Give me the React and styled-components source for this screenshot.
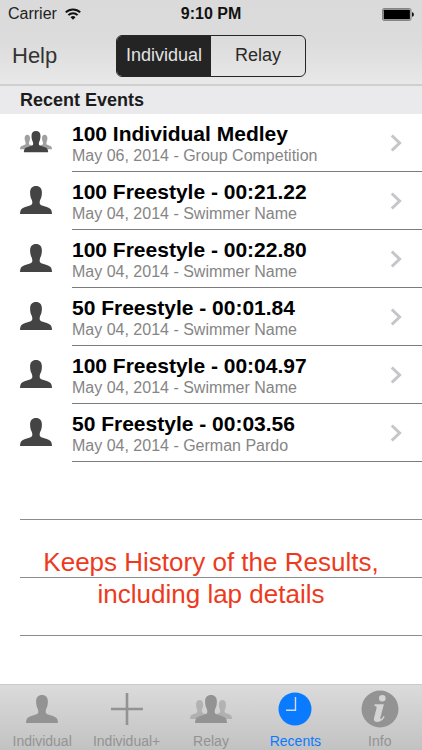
import React, { useState } from "react";
import styled, { createGlobalStyle } from "styled-components";

const GlobalStyle = createGlobalStyle`
  *, *::before, *::after { box-sizing: border-box; }
  body {
    margin: 0;
    background: #fff;
    font-family: "Liberation Sans", Arial, sans-serif;
    color: #000;
  }
  button { font: inherit; border: 0; padding: 0; margin: 0; background: none; color: inherit; cursor: pointer; }
`;

const Screen = styled.div`
  display: flex;
  flex-direction: column;
  min-height: 100vh;
`;

const Header = styled.header`
  background: linear-gradient(#dadada 0%, #dcdcdc 50%, #e8e8e8 100%);
  border-bottom: 2px solid #cfcfcf;
`;

const StatusBar = styled.div`
  display: grid;
  grid-template-columns: 1fr auto 1fr;
  align-items: center;
  height: 28px;
  padding: 0 8px;
`;

const Carrier = styled.div`
  display: flex;
  align-items: center;
  gap: 8px;
  font-size: 16px;
  color: #222;
`;

const Clock = styled.div`
  font-size: 16px;
  font-weight: 700;
  color: #111;
`;

const Battery = styled.div`
  display: flex;
  justify-content: flex-end;
`;

const NavBar = styled.nav`
  display: grid;
  grid-template-columns: 1fr minmax(0, 190px) 1fr;
  align-items: center;
  height: 56px;
  padding: 0 12px;
`;

const HelpButton = styled.button`
  justify-self: start;
  font-size: 22px;
  color: #333;
`;

const Segments = styled.div`
  display: grid;
  grid-template-columns: 1fr 1fr;
  height: 42px;
  border: 1px solid #262626;
  border-radius: 6px;
  overflow: hidden;
`;

const Segment = styled.button`
  font-size: 18px;
  padding-bottom: 2px;
  color: ${(p) => (p.$active ? "#e2e2e2" : "#2a2a2a")};
  background: ${(p) => (p.$active ? "#242424" : "transparent")};
`;

const SectionTitle = styled.h2`
  margin: 0;
  padding: 0 20px;
  font-size: 18px;
  line-height: 28px;
  font-weight: 700;
  color: #1c1c1c;
  background: #eaeaec;
`;

const Content = styled.main`
  position: relative;
  flex: 1;
  overflow: hidden;
`;

const List = styled.ul`
  list-style: none;
  margin: 0;
  padding: 0;
`;

const Row = styled.li`
  display: flex;
  height: 58px;
  padding-left: 20px;
`;

const RowIcon = styled.span`
  display: flex;
  align-items: center;
  flex: 0 0 52px;
  padding-bottom: 2px;
  color: #444;
`;

const RowLink = styled.a`
  display: flex;
  align-items: center;
  justify-content: space-between;
  flex: 1;
  min-width: 0;
  padding-right: 20px;
  border-bottom: 1px solid #7c7c7c;
  color: inherit;
  text-decoration: none;
`;

const EventText = styled.div`
  padding-top: 2px;
`;

const EventName = styled.div`
  font-size: 21px;
  line-height: 24px;
  font-weight: 700;
`;

const EventDetail = styled.div`
  font-size: 16px;
  line-height: 20px;
  color: #858585;
`;

const EmptyRow = styled.li`
  height: 58px;
  margin-left: 20px;
  border-bottom: 1px solid #8c8c8c;
`;

const Caption = styled.p`
  position: absolute;
  left: 0;
  right: 0;
  bottom: 74px;
  margin: 0;
  text-align: center;
  font-size: 26px;
  line-height: 32px;
  color: #ee3a1c;
`;

const TabBar = styled.nav`
  display: grid;
  grid-template-columns: repeat(5, 1fr);
  height: 66px;
  border-top: 1px solid #cacaca;
  background: linear-gradient(#dbdbdb, #c2c2c2);
`;

const Tab = styled.button`
  display: flex;
  flex-direction: column;
  align-items: center;
  font-size: 14px;
  line-height: 16px;
  color: ${(p) => (p.$active ? "#0a7aff" : "#939393")};
`;

const TabIcon = styled.span`
  display: flex;
  align-items: center;
  justify-content: center;
  height: 48px;
`;

const PERSON =
  "M16 0c-3.800 0-5.900 2.400-5.900 6.400 0 2.900.6 5.200 1.400 6.900.6 1.200.8 2 .8 3.400 0 1.400-.5 2-2.300 2.700l-4.800 1.500C2.600 21.800 1.200 22.800.7 24.200.3 25.400 0 26.700 0 28h32c0-1.300-.3-2.600-.7-3.800-.5-1.400-1.900-2.400-4.500-3.300l-4.800-1.500c-1.800-.7-2.300-1.300-2.300-2.700 0-1.400.2-2.200.8-3.400.8-1.700 1.400-4 1.400-6.900C21.900 2.400 19.800 0 16 0z";

const PersonIcon = () => (
  <svg width="32" height="28" viewBox="0 0 32 28" fill="currentColor" aria-hidden="true">
    <path d={PERSON} />
  </svg>
);

const GroupIcon = ({ width }) => (
  <svg width={width} height={(width * 28) / 42} viewBox="0 0 42 28" aria-hidden="true">
    <g fill="currentColor" opacity="0.5">
      <path d={PERSON} transform="translate(0 5) scale(0.6 0.68)" />
      <path d={PERSON} transform="translate(22.800 5) scale(0.6 0.68)" />
    </g>
    <path d={PERSON} transform="translate(5 0)" fill="currentColor" />
  </svg>
);

const PlusIcon = () => (
  <svg width="32" height="32" viewBox="0 0 32 32" stroke="currentColor" strokeWidth="2.600" aria-hidden="true">
    <path d="M16 0v32M0 16h32" />
  </svg>
);

const RecentsIcon = () => (
  <svg width="34" height="34" viewBox="0 0 34 34" fill="none" aria-hidden="true">
    <circle cx="17" cy="17" r="16.500" fill="currentColor" />
    <path d="M17.500 5v13.300H8" stroke="#cfdcf0" strokeWidth="1.400" />
  </svg>
);

const InfoIcon = () => (
  <svg width="38" height="38" viewBox="0 0 38 38" aria-hidden="true">
    <circle cx="19" cy="19" r="18.500" fill="currentColor" />
    <circle cx="21.300" cy="8.300" r="3.300" fill="#d4d4d4" />
    <path
      d="M13.500 14.300h9.400l-3.600 13.500c-.3 1.300.5 1.500 1.200.9.800-.6 1.500-1.600 2.100-2.600l1.100.7c-1.800 3.300-4.200 5.200-7.200 5.200-2.900 0-4.100-1.700-3.500-4.100l2.600-9.800c.3-1.300-.1-2-2.100-2.100z"
      fill="#d4d4d4"
    />
  </svg>
);

const WifiIcon = () => (
  <svg width="16" height="12" viewBox="0 0 16 12" fill="none" stroke="#111" strokeWidth="2" aria-hidden="true">
    <path d="M.8 4.400a10.200 10.200 0 0 1 14.400 0M3.400 7.100a6.500 6.500 0 0 1 9.200 0" />
    <path d="M8 11.800 5.500 9.300a3.500 3.500 0 0 1 5 0z" fill="#111" stroke="none" />
  </svg>
);

const BatteryIcon = () => (
  <svg width="32" height="13" viewBox="0 0 32 13" role="img" aria-label="Battery full">
    <rect x=".5" y=".5" width="28.500" height="12" rx="1.500" fill="#c4c4c4" stroke="#858585" />
    <rect x="1.700" y="1.700" width="26.200" height="9.600" rx=".6" fill="#000" />
    <path d="M30 4.300c1.300.3 1.900 1.100 1.900 2.200s-.6 1.900-1.900 2.200z" fill="#111" />
  </svg>
);

const ChevronIcon = () => (
  <svg width="12" height="18" viewBox="0 0 12 18" fill="none" stroke="#c5c5ca" strokeWidth="3" aria-hidden="true">
    <path d="m1.800 1.500 7.800 7.500-7.800 7.500" />
  </svg>
);

const EVENTS = [
  { name: "100 Individual Medley", detail: "May 06, 2014 - Group Competition", group: true },
  { name: "100 Freestyle - 00:21.22", detail: "May 04, 2014 - Swimmer Name" },
  { name: "100 Freestyle - 00:22.80", detail: "May 04, 2014 - Swimmer Name" },
  { name: "50 Freestyle - 00:01.84", detail: "May 04, 2014 - Swimmer Name" },
  { name: "100 Freestyle - 00:04.97", detail: "May 04, 2014 - Swimmer Name" },
  { name: "50 Freestyle - 00:03.56", detail: "May 04, 2014 - German Pardo" },
];

const TABS = [
  { label: "Individual", icon: <PersonIcon /> },
  { label: "Individual+", icon: <PlusIcon /> },
  { label: "Relay", icon: <GroupIcon width={42} /> },
  { label: "Recents", icon: <RecentsIcon /> },
  { label: "Info", icon: <InfoIcon /> },
];

export default function App() {
  const [segment, setSegment] = useState("Individual");
  const [tab, setTab] = useState("Recents");

  return (
    <Screen>
      <GlobalStyle />
      <Header>
        <StatusBar>
          <Carrier>
            Carrier
            <WifiIcon />
          </Carrier>
          <Clock>9:10 PM</Clock>
          <Battery>
            <BatteryIcon />
          </Battery>
        </StatusBar>
        <NavBar>
          <HelpButton type="button">Help</HelpButton>
          <Segments role="group" aria-label="Event type">
            {["Individual", "Relay"].map((name) => (
              <Segment
                key={name}
                type="button"
                $active={segment === name}
                aria-pressed={segment === name}
                onClick={() => setSegment(name)}
              >
                {name}
              </Segment>
            ))}
          </Segments>
        </NavBar>
      </Header>
      <SectionTitle>Recent Events</SectionTitle>
      <Content>
        <List>
          {EVENTS.map((event, index) => (
            <Row key={index}>
              <RowIcon>{event.group ? <GroupIcon width={32} /> : <PersonIcon />}</RowIcon>
              <RowLink href="#event">
                <EventText>
                  <EventName>{event.name}</EventName>
                  <EventDetail>{event.detail}</EventDetail>
                </EventText>
                <ChevronIcon />
              </RowLink>
            </Row>
          ))}
          <EmptyRow />
          <EmptyRow />
          <EmptyRow />
        </List>
        <Caption>
          Keeps History of the Results,
          <br />
          including lap details
        </Caption>
      </Content>
      <TabBar aria-label="Sections">
        {TABS.map(({ label, icon }) => (
          <Tab
            key={label}
            type="button"
            $active={tab === label}
            aria-current={tab === label ? "page" : undefined}
            onClick={() => setTab(label)}
          >
            <TabIcon>{icon}</TabIcon>
            {label}
          </Tab>
        ))}
      </TabBar>
    </Screen>
  );
}
